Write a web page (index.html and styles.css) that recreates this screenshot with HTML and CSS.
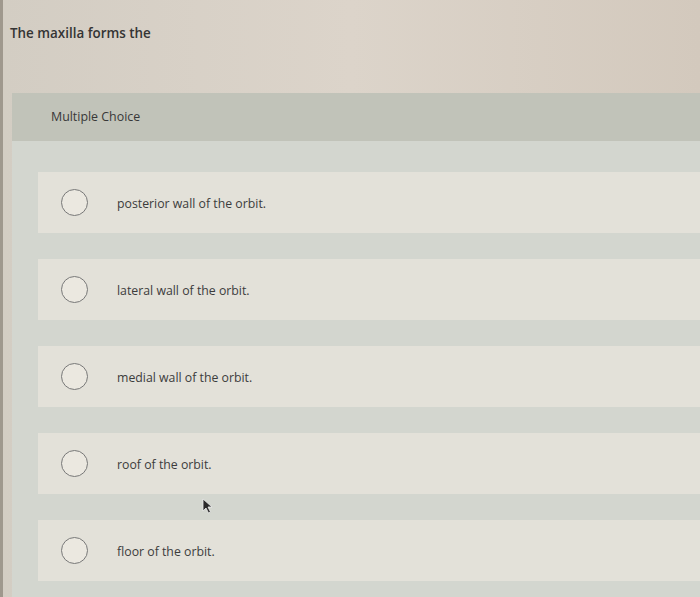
FILE: index.html
```html
<!DOCTYPE html>
<html>
<head>
<meta charset="utf-8">
<link rel="stylesheet" href="styles.css">
</head>
<body>
<div class="frame">
  <div class="question">The maxilla forms the</div>
  <div class="panel">
    <div class="panel-head">Multiple Choice</div>
    <div class="options">
      <div class="option"><span class="radio"></span><span class="label">posterior wall of the orbit.</span></div>
      <div class="option"><span class="radio"></span><span class="label">lateral wall of the orbit.</span></div>
      <div class="option"><span class="radio"></span><span class="label">medial wall of the orbit.</span></div>
      <div class="option"><span class="radio"></span><span class="label">roof of the orbit.</span></div>
      <div class="option"><span class="radio"></span><span class="label">floor of the orbit.</span></div>
    </div>
  </div>
  <svg class="cursor" width="12" height="16" viewBox="0 0 12 16"><path d="M1 1 L1 13 L4 10 L6.5 15 L8.5 14 L6 9 L10 9 Z" fill="#2a2a2a" stroke="#eee" stroke-width="0.8"/></svg>
</div>
</body>
</html>
```
FILE: styles.css
```css
html, body {
  margin: 0;
  padding: 0;
}
body {
  width: 700px;
  height: 597px;
  overflow: hidden;
  background: #d7cfc6;
  font-family: "Open Sans", Lato, "Liberation Sans", sans-serif;
}
.frame {
  position: relative;
  height: 597px;
  border-left: 3px solid #9f988d;
  background: linear-gradient(90deg, #d3cdc3 0%, #dcd4ca 50%, #d3c9bd 100%);
}
.question {
  padding: 24px 0 0 7px;
  height: 93px;
  box-sizing: border-box;
  font-size: 13.4px;
  line-height: 18px;
  color: #343434;
  font-weight: 600;
}
.panel {
  margin-left: 9px;
  height: 504px;
  background: #d3d6cf;
}
.panel-head {
  height: 48px;
  box-sizing: border-box;
  padding: 16px 0 0 39px;
  background: #c1c3b9;
  font-size: 12.4px;
  line-height: 16px;
  color: #383838;
}
.options {
  padding: 31px 0 0 26px;
  display: flex;
  flex-direction: column;
  gap: 26px;
}
.option {
  height: 61px;
  background: #e3e1d9;
  display: flex;
  align-items: center;
  padding-left: 23px;
}
.radio {
  width: 25px;
  height: 25px;
  border: 1.5px solid #787878;
  border-radius: 50%;
  background: #ebe8e0;
  flex: none;
}
.label {
  margin-left: 29px;
  font-size: 12.3px;
  color: #3c3c3c;
  padding-top: 2px;
}
.cursor {
  position: absolute;
  left: 199px;
  top: 498px;
}
```
